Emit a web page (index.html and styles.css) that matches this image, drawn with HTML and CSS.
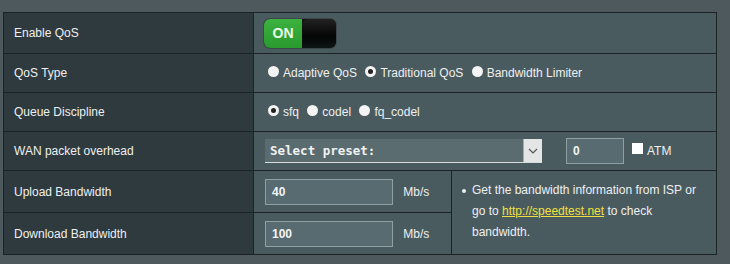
FILE: index.html
```html
<!DOCTYPE html>
<html lang="en">
<head>
    <meta charset="UTF-8">
    <title>QoS Settings</title>
    <link rel="stylesheet" href="styles.css">
</head>
<body>
    <table class="qos-table">
        <tr class="row-first">
            <th>Enable QoS</th>
            <td colspan="2">
                <div class="toggle">
                    <span class="toggle-on">ON</span>
                    <span class="toggle-knob"></span>
                </div>
            </td>
        </tr>
        <tr>
            <th>QoS Type</th>
            <td colspan="2">
                <label class="radio"><span class="dot"></span>Adaptive QoS</label>
                <label class="radio"><span class="dot checked"></span>Traditional QoS</label>
                <label class="radio"><span class="dot"></span>Bandwidth Limiter</label>
            </td>
        </tr>
        <tr>
            <th>Queue Discipline</th>
            <td colspan="2">
                <label class="radio"><span class="dot checked"></span>sfq</label>
                <label class="radio"><span class="dot"></span>codel</label>
                <label class="radio"><span class="dot"></span>fq_codel</label>
            </td>
        </tr>
        <tr>
            <th>WAN packet overhead</th>
            <td colspan="2">
                <div class="overhead">
                    <div class="select">
                        <span class="select-text">Select preset:</span>
                        <span class="select-arrow">
                            <svg width="10" height="6" viewBox="0 0 10 6"><path d="M1 1 L5 5 L9 1" fill="none" stroke="#555" stroke-width="1.2"/></svg>
                        </span>
                    </div>
                    <span class="input small">0</span>
                    <label class="check"><span class="box"></span>ATM</label>
                </div>
            </td>
        </tr>
        <tr class="row-bw">
            <th>Upload Bandwidth</th>
            <td class="bw-cell">
                <span class="input wide">40</span>
                <span class="unit">Mb/s</span>
            </td>
            <td rowspan="2" class="info-cell">
                <ul class="info">
                    <li>Get the bandwidth information from ISP or go to <a href="#">http://speedtest.net</a> to check bandwidth.</li>
                </ul>
            </td>
        </tr>
        <tr class="row-bw">
            <th>Download Bandwidth</th>
            <td class="bw-cell">
                <span class="input wide">100</span>
                <span class="unit">Mb/s</span>
            </td>
        </tr>
    </table>
</body>
</html>
```

FILE: styles.css
```css
body {
    margin: 0;
    background: #4d595d;
    font-family: "Liberation Sans", Arial, sans-serif;
    font-size: 12px;
    color: #fff;
}
.qos-table {
    margin: 12px 0 0 3px;
    width: 714px;
    border-collapse: collapse;
    border: 1px solid #1b2326;
}
.qos-table th,
.qos-table td {
    border: 1px solid #1b2326;
    padding: 0 10px;
    height: 38px;
    text-align: left;
    vertical-align: middle;
}
.qos-table th {
    width: 229px;
    background: #2f3a3e;
    font-weight: normal;
    color: #eef0f0;
}
.qos-table td {
    background: #4a5b60;
}
.row-first th,
.row-first td {
    height: 40px;
}
.row-bw th,
.row-bw td {
    height: 41px;
}

/* switch */
.toggle {
    display: flex;
    width: 72px;
    height: 29px;
    border-radius: 6px;
    overflow: hidden;
    background: #111;
    box-shadow: 0 0 0 1px #3c474b;
}
.toggle-on {
    width: 38px;
    background: linear-gradient(#3cb23f, #2a9a2e);
    color: #eaffea;
    font-weight: bold;
    font-size: 14px;
    line-height: 29px;
    text-align: center;
}
.toggle-knob {
    flex: 1;
    border-radius: 6px;
    background: linear-gradient(#222 0%, #050505 60%, #0e1414 100%);
}

/* radios */
.radio {
    display: inline-flex;
    align-items: center;
    margin-right: 1px;
    color: #eef0f0;
}
.dot {
    width: 11px;
    height: 11px;
    border-radius: 50%;
    background: #f4f4f4;
    margin: -3px 4px 0 4px;
    box-sizing: border-box;
}
.dot.checked {
    border: 3px solid #f4f4f4;
    background: #222;
}

/* overhead row */
.overhead {
    display: flex;
    align-items: center;
}
.select {
    display: flex;
    width: 277px;
    height: 24px;
    margin-left: 1px;
    background: #5a6c70;
    border-bottom: 1px solid #d6dcdc;
    box-sizing: border-box;
}
.select-text {
    flex: 1;
    padding-left: 5px;
    font-family: "DejaVu Sans Mono", "Liberation Mono", monospace;
    font-weight: bold;
    font-size: 12.5px;
    line-height: 23px;
    color: #f0f2f2;
}
.select-arrow {
    width: 18px;
    display: flex;
    align-items: center;
    justify-content: center;
    background: #e4e6e6;
    border-left: 1px solid #aaa;
}
.input {
    display: inline-block;
    box-sizing: border-box;
    height: 26px;
    line-height: 24px;
    padding-left: 6px;
    background: #576b70;
    border: 1px solid #8fa0a3;
    font-weight: bold;
    font-size: 12px;
    color: #f4f4f4;
}
.input.small {
    width: 58px;
    margin-left: 24px;
}
.check {
    display: inline-flex;
    align-items: center;
    margin-left: 8px;
    color: #eef0f0;
}
.box {
    width: 11px;
    height: 11px;
    background: #fff;
    margin: -5px 4px 0 0;
}

/* bandwidth rows */
.bw-cell {
    width: 177px;
}
.input.wide {
    width: 128px;
    margin-left: 1px;
}
.unit {
    margin-left: 7px;
    color: #eef0f0;
}
.info-cell {
    vertical-align: top !important;
    padding: 0 !important;
}
.info {
    margin: 0;
    padding: 9px 12px 0 20px;
    line-height: 21px;
    color: #eef0f0;
}
.info li {
    list-style: none;
    position: relative;
}
.info li::before {
    content: "";
    position: absolute;
    left: -10px;
    top: 9px;
    width: 4px;
    height: 4px;
    border-radius: 50%;
    background: #eef0f0;
}
.info a {
    color: #f0e040;
}
```
